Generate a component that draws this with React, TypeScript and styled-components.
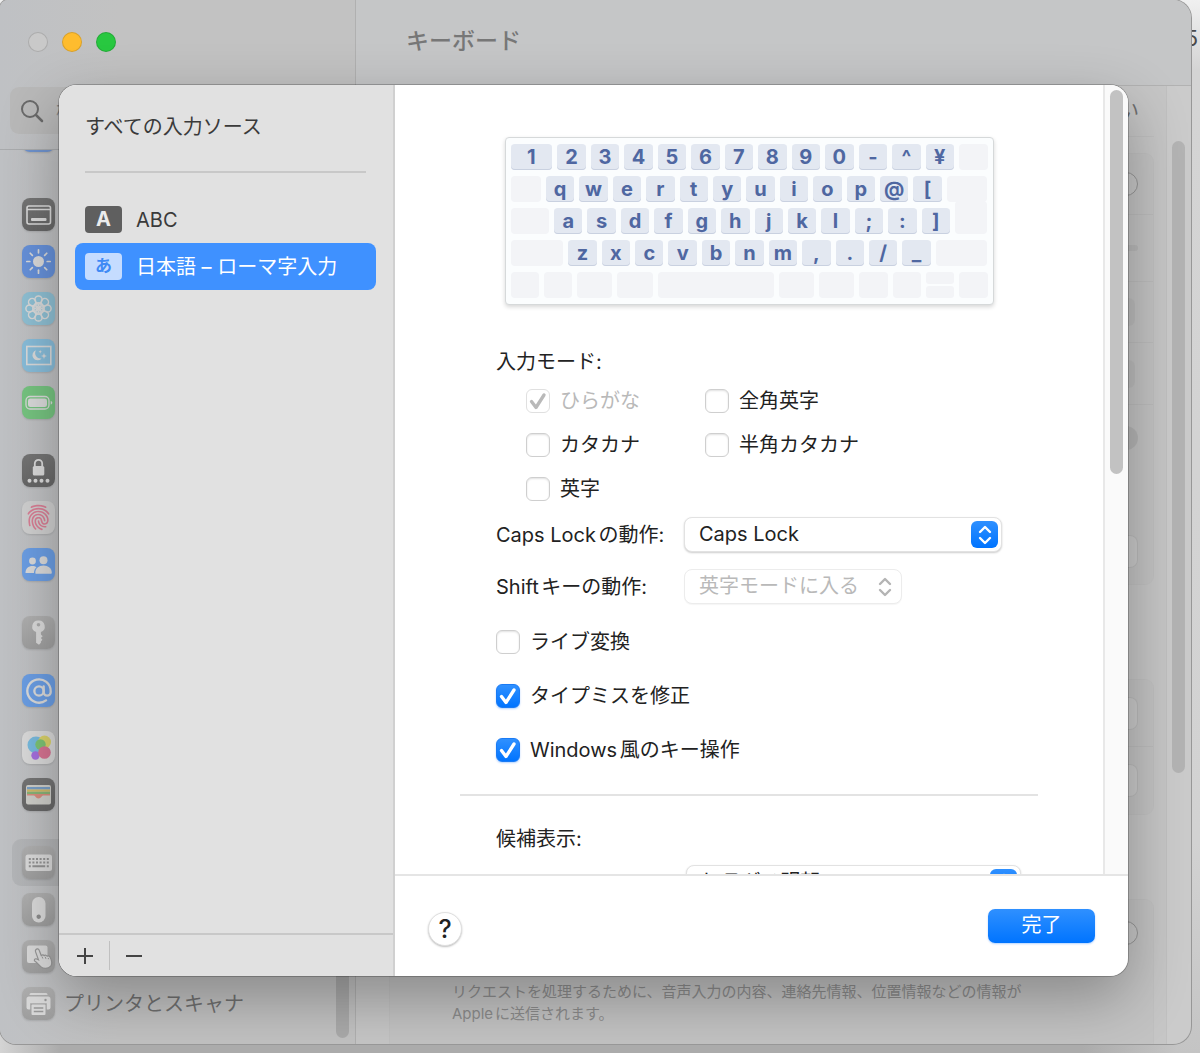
import React from "react";
import styled, { createGlobalStyle, css } from "styled-components";
import { AtSign } from "lucide-react";
import { IoFingerPrint } from "react-icons/io5";

const GlobalStyle = createGlobalStyle`
  *, *::before, *::after { box-sizing: border-box; }
  body { margin: 0; text-autospace: normal; }
  body, button, input, select {
    font-family: Inter, "Noto Sans CJK JP", sans-serif;
    font-size: 20px;
    line-height: 24px;
  }
`;

/* ---------- desktop and window ---------- */

const Desktop = styled.div`
  position: relative;
  height: 100vh;
  min-height: 1000px;
  padding: 0 9px 9px 0;
  overflow: hidden;
  background: linear-gradient(180deg, #f0f0f0 0, #d4d4d4 70px, #d2d2d2 80%, #c4c4c4 100%);
`;

const Clock = styled.span`
  position: absolute;
  top: 26px;
  right: 2px;
  font-size: 22px;
  color: #4a4a4a;
`;

const BottomShade = styled.div`
  position: absolute;
  inset: auto 24px 0 0;
  height: 30px;
  background: linear-gradient(90deg, #d4d4d4 0, #ababab 60px, #ababab 92%, #c4c4c4 100%);
`;

const Window = styled.div`
  position: relative;
  display: flex;
  height: 100%;
  border-radius: 8px 18px 18px 16px;
  overflow: hidden;
  background: #c6c6c6;
  box-shadow: 0 0 0 1px #979797;
`;

/* ---------- sidebar ---------- */

const Sidebar = styled.aside`
  display: flex;
  flex-direction: column;
  width: 356px;
  flex: none;
  border-right: 1px solid #b0b0b0;
  background: linear-gradient(90deg, #bfc1c4 0, #c2c2c2 120px);
`;

const SidebarHeader = styled.header`
  flex: none;
  padding: 32px 8px 15px 10px;
  border-bottom: 1px solid #a9abad;
`;

const Lights = styled.div`
  display: flex;
  gap: 14px;
  margin: 0 0 35px 18px;
`;

const Light = styled.button<{ $color: string }>`
  width: 20px;
  height: 20px;
  padding: 0;
  border: 1px solid rgba(0, 0, 0, 0.14);
  border-radius: 50%;
  background: ${(p) => p.$color};
`;

const SearchBox = styled.label`
  display: flex;
  align-items: center;
  height: 47px;
  padding: 0 10px;
  gap: 12px;
  border-radius: 9px;
  background: #b9b9b9;
  color: #6a6a6a;
`;

const SearchInput = styled.input`
  flex: 1;
  min-width: 0;
  padding: 0;
  border: 0;
  background: transparent;
  color: #555;
  &::placeholder { color: #858585; }
`;

const SidebarBody = styled.div`
  display: flex;
  flex: 1;
  min-height: 0;
  overflow: hidden;
  align-items: flex-end;
`;

const NavList = styled.nav`
  display: flex;
  flex: 1;
  flex-direction: column;
  justify-content: flex-end;
  height: 100%;
  padding: 0 16px 17px 12px;
`;

const NavGroup = styled.div<{ $space: number }>`
  display: flex;
  flex: none;
  flex-direction: column;
  margin-top: ${(p) => p.$space}px;
`;

const NavItem = styled.button<{ $active?: boolean }>`
  display: flex;
  align-items: center;
  gap: 9px;
  height: 47px;
  padding: 0 10px;
  border: 0;
  border-radius: 9px;
  background: ${(p) => (p.$active ? "rgba(0,0,0,.06)" : "transparent")};
  color: #707070;
  text-align: left;
`;

const Tile = styled.span<{ $bg: string }>`
  display: flex;
  flex: none;
  align-items: center;
  justify-content: center;
  width: 33px;
  height: 33px;
  border-radius: 8px;
  background: ${(p) => p.$bg};
  box-shadow: 0 1px 2px rgba(0, 0, 0, 0.12);
  color: #dadada;
`;

const SidebarThumb = styled.div`
  width: 13px;
  height: 400px;
  margin: 0 6px 6px 0;
  border-radius: 7px;
  background: rgba(0, 0, 0, 0.12);
`;

/* ---------- main pane behind the sheet ---------- */

const Main = styled.main`
  display: flex;
  flex: 1;
  min-width: 0;
  flex-direction: column;
`;

const TitleBar = styled.header`
  display: flex;
  flex: none;
  align-items: center;
  height: 86px;
  padding: 0 50px 4px;
  border-bottom: 1px solid #b2b2b2;
  background: #c5c6c7;
`;

const Title = styled.h1`
  margin: 0;
  font-size: 23px;
  font-weight: 500;
  line-height: 28px;
  color: #777;
`;

const MainBody = styled.div`
  display: flex;
  flex: 1;
  min-height: 0;
  overflow: hidden;
`;

const Settings = styled.div`
  flex: 1;
  min-width: 0;
  padding: 0 12px 0 33px;
`;

const Card = styled.section<{ $gap: number }>`
  margin-top: ${(p) => p.$gap}px;
  border: 1px solid rgba(0, 0, 0, 0.02);
  border-radius: 9px;
  background: rgba(0, 0, 0, 0.01);
`;

const SettingRow = styled.div<{ $h: number; $line?: boolean }>`
  display: flex;
  align-items: center;
  justify-content: flex-end;
  height: ${(p) => p.$h}px;
  padding: 0 15px;
  color: #6f6f6f;
  ${(p) => p.$line && css`border-bottom: 1px solid rgba(0, 0, 0, 0.03);`}
`;

const RoundButton = styled.button<{ $filled?: boolean }>`
  width: 24px;
  height: 24px;
  padding: 0;
  border: 1px solid ${(p) => (p.$filled ? "transparent" : "#969696")};
  border-radius: 50%;
  background: ${(p) => (p.$filled ? "rgba(0,0,0,.07)" : "rgba(255,255,255,.08)")};
`;

const PlainButton = styled.button`
  width: 90px;
  height: 33px;
  border: 1px solid rgba(0, 0, 0, 0.08);
  border-radius: 8px;
  background: rgba(255, 255, 255, 0.12);
`;

const Popup = styled.span`
  height: 28px;
  padding: 0 6px;
  margin-right: 3px;
  border-radius: 6px;
  background: rgba(0, 0, 0, 0.03);
`;

const SwitchTrack = styled.span`
  width: 60px;
  height: 6px;
  border-radius: 3px;
  background: rgba(0, 0, 0, 0.05);
`;

const Note = styled.p`
  margin: 0;
  padding: 15px 62px 30px;
  font-size: 15px;
  line-height: 22px;
  color: #8c8c8c;
`;

const MainTrack = styled.div`
  flex: none;
  width: 25px;
  padding: 55px 6px 0 5px;
  border-left: 1px solid rgba(0, 0, 0, 0.05);
  background: rgba(255, 255, 255, 0.1);
`;

const MainThumb = styled.div`
  height: 70%;
  border-radius: 7px;
  background: #b4b4b4;
`;

/* ---------- sheet ---------- */

const Sheet = styled.div`
  position: absolute;
  inset: 85px 63px 68px 59px;
  display: flex;
  overflow: hidden;
  border-radius: 18px;
  background: #fff;
`;

const SheetShadow = styled.div`
  position: absolute;
  inset: 85px 63px 68px 59px;
  border-radius: 18px;
  box-shadow: 0 0 0 1px rgba(0, 0, 0, 0.22), 0 22px 60px rgba(0, 0, 0, 0.3);
`;

const Sources = styled.section`
  display: flex;
  flex: none;
  flex-direction: column;
  width: 336px;
  border-right: 2px solid #d0d0d0;
  background: #e1e1e1;
  color: #3a3a3a;
`;

const SourceList = styled.div`
  display: flex;
  flex: 1;
  flex-direction: column;
  padding: 30px 17px 0 16px;
`;

const SourceTitle = styled.h2`
  margin: 0 10px 23px;
  padding-bottom: 32px;
  border-bottom: 2px solid #c8c8c8;
  font-size: 20px;
  font-weight: 400;
  line-height: 24px;
`;

const Source = styled.button<{ $active?: boolean }>`
  display: flex;
  align-items: center;
  gap: 14px;
  height: 47px;
  padding: 0 10px;
  border: 0;
  border-radius: 8px;
  background: ${(p) => (p.$active ? "#3f91ff" : "transparent")};
  color: ${(p) => (p.$active ? "#fff" : "#3a3a3a")};
`;

const SourceBadge = styled.span<{ $active?: boolean }>`
  width: 37px;
  height: 27px;
  border-radius: 4px;
  background: ${(p) => (p.$active ? "#c5dcff" : "#5f5f5f")};
  color: ${(p) => (p.$active ? "#3f8af5" : "#ececec")};
  font-size: ${(p) => (p.$active ? "17px" : "20px")};
  font-weight: 700;
  line-height: 27px;
  text-align: center;
`;

const SourceTools = styled.div`
  display: flex;
  flex: none;
  align-items: center;
  height: 43px;
  padding: 0 2px;
  border-top: 2px solid #c8c8c8;
`;

const ToolButton = styled.button`
  display: flex;
  align-items: center;
  justify-content: center;
  width: 48px;
  height: 29px;
  padding: 0;
  border: 0;
  background: transparent;
  color: #444;
  & + & { border-left: 1px solid #c0c0c0; }
`;

const Detail = styled.section`
  display: flex;
  flex: 1;
  min-width: 0;
  flex-direction: column;
`;

const DetailBody = styled.div`
  display: flex;
  flex: 1;
  min-height: 0;
  overflow: hidden;
`;

const Scroller = styled.div`
  display: flex;
  flex: 1;
  min-width: 0;
  flex-direction: column;
  align-items: center;
  padding-top: 52px;
  overflow: hidden;
`;

const Track = styled.div`
  flex: none;
  width: 25px;
  padding: 5px 5px 0 5px;
  border-left: 2px solid #e8e8e8;
  background: #fafafa;
`;

const Thumb = styled.div`
  height: 384px;
  width: 13px;
  border-radius: 7px;
  background: #c2c2c2;
`;

/* ---------- keyboard ---------- */

const Keyboard = styled.div`
  display: flex;
  flex: none;
  flex-direction: column;
  gap: 6px;
  width: 489px;
  padding: 6px 5px;
  border: 1px solid #d6d9da;
  border-radius: 4px;
  background: #fbfdfe;
  box-shadow: 0 2px 4px rgba(0, 0, 0, 0.16);
`;

const KeyRow = styled.div`
  display: flex;
  gap: 5px;
  height: 26px;
`;

const Key = styled.span<{ $w: number; $blank?: boolean; $tall?: boolean }>`
  flex: ${(p) => p.$w} 1 0;
  min-width: 0;
  border-radius: 4px;
  background: #e3e8f1;
  box-shadow: inset 0 -1px 0 #c9d1e0;
  color: #4f67a1;
  font-size: 20px;
  font-weight: 700;
  line-height: 27px;
  text-align: center;
  ${(p) => p.$blank && css`background: #f3f4f7; box-shadow: none;`}
  ${(p) => p.$tall && css`box-shadow: 0 -7px 0 #f3f4f7;`}
`;

const SplitKey = styled.span`
  display: flex;
  flex: 28 1 0;
  flex-direction: column;
  gap: 2px;
`;

const HalfKey = styled.span`
  flex: 1;
  border-radius: 3px;
  background: #f3f4f7;
`;

/* ---------- form ---------- */

const Form = styled.div`
  display: flex;
  flex: none;
  flex-direction: column;
  width: 578px;
  margin-top: 45px;
  color: #222;
`;

const Block = styled.div`
  display: flex;
  flex-direction: column;
  padding-left: 36px;
`;

const Caption = styled.div`
  height: 24px;
`;

const ModeGrid = styled.div`
  display: grid;
  grid-template-columns: 179px 1fr;
  gap: 20px 0;
  padding: 15px 0 16px 30px;
`;

const CheckLabel = styled.label<{ $off?: boolean }>`
  display: flex;
  align-items: center;
  gap: 10px;
  height: 24px;
  color: ${(p) => (p.$off ? "#b9b9b9" : "#222")};
`;

const tick = (color: string) =>
  `url("data:image/svg+xml,%3Csvg xmlns='http://www.w3.org/2000/svg' viewBox='0 0 24 24'%3E%3Cpath d='M5.500 12.500l4.500 6L18 6' fill='none' stroke='${color}' stroke-width='3.300' stroke-linecap='round' stroke-linejoin='round'/%3E%3C/svg%3E")`;

const Check = styled.input`
  appearance: none;
  flex: none;
  width: 24px;
  height: 24px;
  margin: 0;
  border: 1px solid #cfcfcf;
  border-radius: 6px;
  background: #fff;
  box-shadow: inset 0 1px 2px rgba(0, 0, 0, 0.12);
  &:checked {
    border-color: #1a7bf5;
    background: ${tick("white")} center / 24px 24px no-repeat, linear-gradient(#2f90ff, #0074ff);
    box-shadow: 0 1px 2px rgba(0, 110, 255, 0.3);
  }
  &:disabled {
    border-color: #e0e0e0;
    background: ${tick("%23b9b9b9")} center / 24px 24px no-repeat, #fff;
    box-shadow: none;
  }
`;

const SelectRow = styled.div`
  display: grid;
  grid-template-columns: 188px 1fr;
  align-items: center;
  height: 35px;
  & + & { margin-top: 17px; }
`;

const SelectBox = styled.span<{ $w: number; $off?: boolean }>`
  position: relative;
  display: block;
  width: ${(p) => p.$w}px;
  height: 35px;
`;

const Select = styled.select`
  appearance: none;
  width: 100%;
  height: 35px;
  padding: 0 40px 2px 14px;
  border: 1px solid #e2e2e2;
  border-radius: 8px;
  background: #fff;
  box-shadow: 0 1px 2px rgba(0, 0, 0, 0.2);
  color: #222;
  &:disabled {
    border-color: #ececec;
    box-shadow: 0 1px 1px rgba(0, 0, 0, 0.04);
    color: #b9b9b9;
    opacity: 1;
  }
`;

const Stepper = styled.span<{ $off?: boolean }>`
  position: absolute;
  top: 4px;
  right: 4px;
  display: flex;
  align-items: center;
  justify-content: center;
  width: 27px;
  height: 27px;
  border-radius: 6px;
  background: ${(p) => (p.$off ? "transparent" : "linear-gradient(#2f90ff, #0074ff)")};
  color: ${(p) => (p.$off ? "#b4b4b4" : "#fff")};
  pointer-events: none;
`;

const Options = styled.div`
  display: flex;
  flex-direction: column;
  gap: 30px;
  padding-top: 26px;
`;

const Rule = styled.hr`
  width: 100%;
  height: 2px;
  margin: 32px 0 31px;
  border: 0;
  background: #e3e3e3;
`;

const FontRow = styled.div`
  display: flex;
  padding: 14px 0 0 190px;
`;

const Footer = styled.footer`
  display: flex;
  flex: none;
  align-items: center;
  justify-content: space-between;
  height: 102px;
  padding: 0 33px;
  border-top: 2px solid #e5e5e5;
`;

const Help = styled.button`
  width: 34px;
  height: 34px;
  padding: 0;
  margin-top: 6px;
  border: 1px solid #e0e0e0;
  border-radius: 50%;
  background: #fff;
  box-shadow: 0 1px 2px rgba(0, 0, 0, 0.26);
  color: #222;
  font-size: 25px;
  font-weight: 500;
  line-height: 32px;
`;

const Done = styled.button`
  width: 107px;
  height: 34px;
  padding: 0 0 2px;
  border: 0;
  border-radius: 7px;
  background: linear-gradient(#2f90ff, #0074ff);
  box-shadow: 0 1px 2px rgba(0, 110, 255, 0.3);
  color: #fff;
`;

/* ---------- icons ---------- */

const Svg = ({ children }: { children: React.ReactNode }) => (
  <svg width="33" height="33" viewBox="0 0 33 33" fill="none" aria-hidden="true">
    {children}
  </svg>
);

const INK = "#dadada";
const petals = [0, 45, 90, 135, 180, 225, 270, 315];

const icons = {
  dock: (
    <Svg>
      <rect x="5" y="8" width="23.500" height="18" rx="2" stroke={INK} strokeWidth="1.600" />
      <path d="M5 11.500h23.500" stroke={INK} strokeWidth="1.300" />
      <rect x="9" y="20" width="15.500" height="3" rx="1" fill={INK} />
    </Svg>
  ),
  sun: (
    <Svg>
      <circle cx="16.500" cy="16.500" r="5.500" fill={INK} />
      {petals.map((a) => (
        <path key={a} d="M16.500 4.800v3" transform={`rotate(${a} 16.5 16.5)`} stroke={INK} strokeWidth="1.700" strokeLinecap="round" />
      ))}
    </Svg>
  ),
  flower: (
    <Svg>
      {petals.map((a) => (
        <circle key={a} cx="16.500" cy="7.500" r="3.600" transform={`rotate(${a} 16.5 16.5)`} stroke={INK} strokeWidth="1.500" />
      ))}
      {petals.map((a) => (
        <circle key={a} cx="16.500" cy="13.500" r="2.600" transform={`rotate(${a} 16.5 16.5)`} stroke={INK} strokeWidth="1.100" />
      ))}
    </Svg>
  ),
  night: (
    <Svg>
      <rect x="4.800" y="7.500" width="24" height="18" stroke={INK} strokeWidth="1.600" />
      <path d="M14 11.200a5.200 5.200 0 1 0 5.600 8.300 5.500 5.500 0 0 1-5.600-8.300z" fill={INK} />
      <path d="M22 14l.8 2.200 2.200.8-2.200.8-.8 2.200-.8-2.200-2.200-.8 2.200-.8zM18.200 11l.5 1.200 1.200.5-1.200.5-.5 1.200-.5-1.200-1.200-.5 1.200-.5z" fill={INK} />
    </Svg>
  ),
  battery: (
    <Svg>
      <rect x="4" y="10.500" width="23" height="12.500" rx="4" stroke={INK} strokeWidth="1.300" />
      <rect x="6" y="12.500" width="19" height="8.500" rx="2.300" fill={INK} />
      <path d="M28.700 15v3.500c1.100-.3 1.600-1 1.600-1.750s-.5-1.450-1.600-1.750z" fill={INK} />
    </Svg>
  ),
  lock: (
    <Svg>
      <rect x="10.800" y="12" width="11.500" height="9.500" rx="1.600" fill={INK} />
      <path d="M12.800 12.500V9.500a3.700 3.700 0 0 1 7.400 0v3" stroke={INK} strokeWidth="1.800" />
      {[7.5, 13.5, 19.5, 25.5].map((x) => (
        <circle key={x} cx={x} cy="26.800" r="2" fill={INK} />
      ))}
    </Svg>
  ),
  people: (
    <Svg>
      <circle cx="10.500" cy="13" r="3.400" fill={INK} />
      <path d="M3.500 25c0-4.500 3-7 7-7 1.700 0 3 .4 4 1.200-1.800 1.500-2.500 3.500-2.500 5.800z" fill={INK} />
      <circle cx="21.500" cy="12.300" r="4" fill={INK} />
      <path d="M13.300 25c0-4.700 3.500-7.500 8.200-7.500s8.300 2.800 8.300 7.500c0 .5-.3.800-.8.800H14c-.5 0-.7-.3-.7-.8z" fill={INK} />
    </Svg>
  ),
  key: (
    <Svg>
      <path fillRule="evenodd" d="M16.500 4.500a6 6 0 0 1 2.400 11.600v2.400l1.800 1.800-1.800 1.800 1.500 1.700-1.500 1.700v1.300l-1.900 2-2.900-2V16.100A6 6 0 0 1 16.500 4.500zm0 2.400a1.800 1.800 0 1 0 0 3.600 1.800 1.800 0 0 0 0-3.600z" fill={INK} />
    </Svg>
  ),
  bubbles: (
    <Svg>
      <circle cx="14" cy="14" r="8.500" fill="#78bade" />
      <circle cx="22.500" cy="11" r="6.500" fill="#dad26a" />
      <circle cx="18.500" cy="13.500" r="5.200" fill="#7dc374" />
      <circle cx="13.500" cy="24.500" r="4.200" fill="#a570de" />
      <circle cx="22.500" cy="21.500" r="6.300" fill="#d77392" />
    </Svg>
  ),
  wallet: (
    <Svg>
      <rect x="4" y="7" width="25" height="19.500" rx="2" fill="#cecec9" />
      <path d="M5 9h23v2.500H5z" fill="#789ec5" />
      <path d="M5 11.500h23v2.300H5z" fill="#d0b967" />
      <path d="M5 13.800h23v2.300H5z" fill="#88b377" />
      <path d="M5 16h23v1.500h-7c-1.300 0-1.800 3-4.500 3s-3.200-3-4.500-3H5z" fill="#d88c7d" />
    </Svg>
  ),
  keyboard: (
    <Svg>
      <rect x="3.500" y="8.500" width="26.500" height="16.500" rx="2.500" fill={INK} />
      {[13, 16.5].map((y) => (
        <path key={y} d={`M6.800 ${y}h20`} stroke="#939393" strokeWidth="1.900" strokeDasharray="2 1.600" />
      ))}
      <path d="M6.800 20.200h2M10.400 20.200h12.800M24.800 20.200h2" stroke="#939393" strokeWidth="1.900" />
    </Svg>
  ),
  mouse: (
    <Svg>
      <rect x="10" y="4" width="13.500" height="25.500" rx="6.500" fill={INK} />
      <path d="M16.800 21.500a2.200 2.200 0 1 1-1.500.5c.5-.4 1-.6 1.500-.5z" fill="#8c8c8c" />
    </Svg>
  ),
  trackpad: (
    <Svg>
      <rect x="5" y="5.500" width="20.500" height="17.500" rx="2" fill={INK} />
      <path d="M14 9.500c1-1.200 2.700-.6 3.200.8l2 5.200c1.200-1 2.300-.8 3 .1 1.100-.8 2.300-.4 2.900.5 1.300-.5 2.600.1 3.200 1.400 1.600 3.200 2.200 6.300.4 8.600-2.600 3-7.600 2.700-10 .5-1.900-1.700-4-4.300-6-5.600-.9-1 .1-2.500 1.500-2.200l2.300 1-3-8.200c-.3-.8-.1-1.500.5-2.100z" fill={INK} stroke="#979797" strokeWidth="1.200" />
      <path d="M20 16.500l.8 2M23.200 16.800l.7 2M26.200 18l.4 1.200" stroke="#979797" strokeWidth="1" />
    </Svg>
  ),
  printer: (
    <Svg>
      <path d="M9 6h15c1 0 1.500.8 1.500 2h-18C7.500 6.800 8 6 9 6z" fill={INK} />
      <path d="M7 9.500h19a2.500 2.500 0 0 1 2.500 2.500v8.500a2 2 0 0 1-2 2h-1.700v-6.300H8.200v6.300H6.500a2 2 0 0 1-2-2V12A2.500 2.500 0 0 1 7 9.500z" fill={INK} />
      <circle cx="23.500" cy="13" r="1.200" fill="#999" />
      <rect x="9.500" y="17.500" width="14" height="10.500" rx="1" fill={INK} />
      <path d="M11.800 21h9.500M11.800 24.500h9.500" stroke="#999" strokeWidth="1.300" />
    </Svg>
  ),
};

type Nav = { name: string; bg: string; icon?: React.ReactNode; shown?: boolean; active?: boolean };

const DARK = "linear-gradient(#757575, #676767)";
const GRAY = "linear-gradient(#b0b0b0, #9f9f9f)";

const navGroups: { space: number; items: Nav[] }[] = [
  { space: 0, items: [{ name: "一般", bg: "#6f93ce" }] },
  {
    space: 32,
    items: [
      { name: "デスクトップとDock", bg: DARK, icon: icons.dock },
      { name: "ディスプレイ", bg: "#6691da", icon: icons.sun },
      { name: "壁紙", bg: "#8fc0d4", icon: icons.flower },
      { name: "スクリーンセーバ", bg: "#88bdda", icon: icons.night },
      { name: "バッテリー", bg: "#76c480", icon: icons.battery },
    ],
  },
  {
    space: 21,
    items: [
      { name: "ロック画面", bg: DARK, icon: icons.lock },
      { name: "Touch ID", bg: "#d0d0d0", icon: <IoFingerPrint size={27} color="#d97f95" /> },
      { name: "ユーザとグループ", bg: "#6b9ee4", icon: icons.people },
    ],
  },
  { space: 21, items: [{ name: "パスワード", bg: GRAY, icon: icons.key }] },
  { space: 11, items: [{ name: "インターネットアカウント", bg: "#6b9ee4", icon: <AtSign size={28} strokeWidth={2} /> }] },
  {
    space: 10,
    items: [
      { name: "Game Center", bg: "#dadada", icon: icons.bubbles },
      { name: "ウォレット", bg: DARK, icon: icons.wallet },
    ],
  },
  {
    space: 21,
    items: [
      { name: "キーボード", bg: GRAY, icon: icons.keyboard, active: true },
      { name: "マウス", bg: GRAY, icon: icons.mouse },
      { name: "トラックパッド", bg: GRAY, icon: icons.trackpad },
      { name: "プリンタとスキャナ", bg: GRAY, icon: icons.printer, shown: true },
    ],
  },
];

const Chevrons = () => (
  <svg width="16" height="22" viewBox="0 0 16 22" fill="none" aria-hidden="true">
    <path d="M3 8l5-5 5 5M3 14l5 5 5-5" stroke="currentColor" strokeWidth="2.400" strokeLinecap="round" strokeLinejoin="round" />
  </svg>
);

/* ---------- keyboard data ---------- */

const letterRows = [
  { lead: 30, keys: [..."qwertyuiop@["], tail: 40 },
  { lead: 38, keys: [..."asdfghjkl;:]"], tail: 32, tall: true },
  { lead: 52, keys: [..."zxcvbnm,./_"], tail: 51 },
];

const KeyboardView = () => (
  <Keyboard>
    <KeyRow>
      <Key $w={41}>1</Key>
      {[..."234567890-^¥"].map((k) => <Key key={k} $w={28}>{k}</Key>)}
      <Key $w={28} $blank />
    </KeyRow>
    {letterRows.map((row) => (
      <KeyRow key={row.lead}>
        <Key $w={row.lead} $blank />
        {row.keys.map((k) => <Key key={k} $w={28}>{k}</Key>)}
        <Key $w={row.tail} $blank $tall={row.tall} />
      </KeyRow>
    ))}
    <KeyRow>
      {[28, 28, 35, 35, 115, 35, 35, 28, 28].map((w, i) => <Key key={i} $w={w} $blank />)}
      <SplitKey><HalfKey /><HalfKey /></SplitKey>
      <Key $w={28} $blank />
    </KeyRow>
  </Keyboard>
);

const Option = ({ text, on, off }: { text: string; on?: boolean; off?: boolean }) => (
  <CheckLabel $off={off}>
    <Check type="checkbox" defaultChecked={on} disabled={off} />
    {text}
  </CheckLabel>
);

const Menu = ({ id, value, width, off, label }: { id: string; value: string; width: number; off?: boolean; label?: string }) => (
  <SelectBox $w={width}>
    <Select id={id} disabled={off} aria-label={label}><option>{value}</option></Select>
    <Stepper $off={off}><Chevrons /></Stepper>
  </SelectBox>
);

export default function App() {
  return (
    <>
      <GlobalStyle />
      <Desktop>
        <Clock>5</Clock>
        <BottomShade />
        <Window>
          <Sidebar>
            <SidebarHeader>
              <Lights>
                <Light $color="#c9c9c9" aria-label="閉じる" />
                <Light $color="#febc2e" aria-label="しまう" />
                <Light $color="#28c840" aria-label="拡大" />
              </Lights>
              <SearchBox>
                <svg width="24" height="24" viewBox="0 0 24 24" fill="none" stroke="currentColor" strokeWidth="2" strokeLinecap="round" aria-hidden="true">
                  <circle cx="10" cy="10" r="8" />
                  <path d="M16 16l6 6" strokeWidth="2.500" />
                </svg>
                <SearchInput type="search" placeholder="検索" aria-label="検索" />
              </SearchBox>
            </SidebarHeader>
            <SidebarBody>
              <NavList>
                {navGroups.map((g, i) => (
                  <NavGroup key={i} $space={g.space}>
                    {g.items.map((n) => (
                      <NavItem key={n.name} $active={n.active} aria-label={n.name}>
                        <Tile $bg={n.bg}>{n.icon}</Tile>
                        {n.shown && n.name}
                      </NavItem>
                    ))}
                  </NavGroup>
                ))}
              </NavList>
              <SidebarThumb />
            </SidebarBody>
          </Sidebar>

          <Main>
            <TitleBar><Title>キーボード</Title></TitleBar>
            <MainBody>
              <Settings>
                <SettingRow $h={51} $line>い</SettingRow>
                <Card $gap={16}>
                  <SettingRow $h={61} $line><RoundButton aria-label="情報" /></SettingRow>
                  <SettingRow $h={67} $line><SwitchTrack /></SettingRow>
                  <SettingRow $h={61} $line><Popup>:</Popup></SettingRow>
                  <SettingRow $h={62} $line><Popup>:</Popup></SettingRow>
                  <SettingRow $h={65}><RoundButton $filled aria-label="ヘルプ" /></SettingRow>
                  <SettingRow $h={48} />
                  <SettingRow $h={66}><PlainButton aria-label="編集" /></SettingRow>
                </Card>
                <Card $gap={94}>
                  <SettingRow $h={67} $line><PlainButton aria-label="編集" /></SettingRow>
                  <SettingRow $h={67}><PlainButton aria-label="編集" /></SettingRow>
                </Card>
                <Card $gap={84}>
                  <SettingRow $h={66}><RoundButton aria-label="ヘルプ" /></SettingRow>
                  <Note>
                    リクエストを処理するために、音声入力の内容、連絡先情報、位置情報などの情報が
                    <br />
                    Appleに送信されます。
                  </Note>
                </Card>
              </Settings>
              <MainTrack><MainThumb /></MainTrack>
            </MainBody>
          </Main>

          <SheetShadow />
          <Sheet role="dialog" aria-label="入力ソース">
            <Sources>
              <SourceList>
                <SourceTitle>すべての入力ソース</SourceTitle>
                <Source><SourceBadge>A</SourceBadge>ABC</Source>
                <Source $active><SourceBadge $active>あ</SourceBadge>日本語 – ローマ字入力</Source>
              </SourceList>
              <SourceTools>
                <ToolButton aria-label="追加">
                  <svg width="16" height="16" viewBox="0 0 16 16" stroke="currentColor" strokeWidth="2" aria-hidden="true"><path d="M8 0v16M0 8h16" /></svg>
                </ToolButton>
                <ToolButton aria-label="削除">
                  <svg width="16" height="16" viewBox="0 0 16 16" stroke="currentColor" strokeWidth="2" aria-hidden="true"><path d="M0 8h16" /></svg>
                </ToolButton>
              </SourceTools>
            </Sources>

            <Detail>
              <DetailBody>
                <Scroller>
                  <KeyboardView />
                  <Form>
                    <Block>
                      <Caption>入力モード:</Caption>
                      <ModeGrid>
                        <Option text="ひらがな" on off />
                        <Option text="全角英字" />
                        <Option text="カタカナ" />
                        <Option text="半角カタカナ" />
                        <Option text="英字" />
                      </ModeGrid>
                      <SelectRow>
                        <label htmlFor="caps">Caps Lockの動作:</label>
                        <Menu id="caps" value="Caps Lock" width={318} />
                      </SelectRow>
                      <SelectRow>
                        <label htmlFor="shift">Shiftキーの動作:</label>
                        <Menu id="shift" value="英字モードに入る" width={218} off />
                      </SelectRow>
                      <Options>
                        <Option text="ライブ変換" />
                        <Option text="タイプミスを修正" on />
                        <Option text="Windows風のキー操作" on />
                      </Options>
                    </Block>
                    <Rule />
                    <Block>
                      <Caption>候補表示:</Caption>
                      <FontRow>
                        <Menu id="font" value="ヒラギノ明朝 ProN W3" width={335} label="候補表示のフォント" />
                      </FontRow>
                    </Block>
                  </Form>
                </Scroller>
                <Track><Thumb /></Track>
              </DetailBody>
              <Footer>
                <Help aria-label="ヘルプ">?</Help>
                <Done>完了</Done>
              </Footer>
            </Detail>
          </Sheet>
        </Window>
      </Desktop>
    </>
  );
}
